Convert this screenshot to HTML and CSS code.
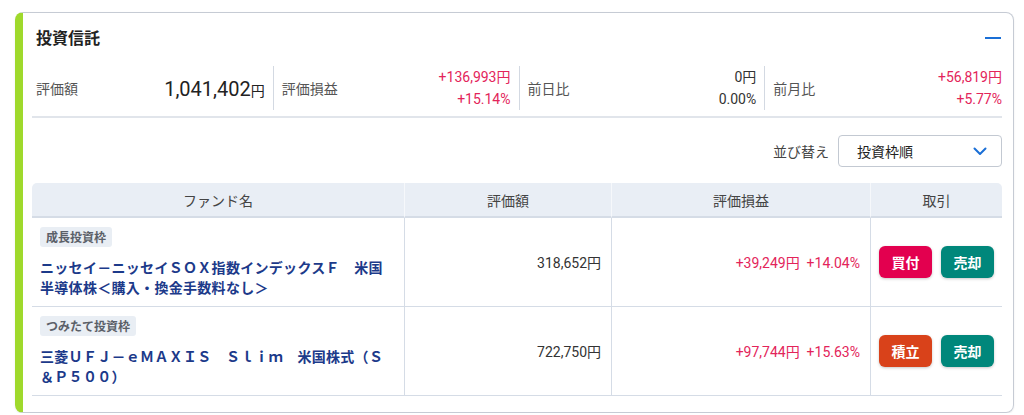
FILE: index.html
```html
<!DOCTYPE html>
<html lang="ja">
<head>
<meta charset="utf-8">
<link rel="stylesheet" href="styles.css">
</head>
<body>
<section class="card">
  <header class="card-head">
    <h2 class="title">投資信託</h2>
    <span class="collapse" aria-label="閉じる"></span>
  </header>

  <div class="summary">
    <div class="sum-cell">
      <span class="sum-label">評価額</span>
      <span class="sum-big">1,041,402<small>円</small></span>
    </div>
    <div class="sum-cell">
      <span class="sum-label">評価損益</span>
      <span class="sum-vals plus"><span>+136,993円</span><span>+15.14%</span></span>
    </div>
    <div class="sum-cell">
      <span class="sum-label">前日比</span>
      <span class="sum-vals"><span>0円</span><span>0.00%</span></span>
    </div>
    <div class="sum-cell">
      <span class="sum-label">前月比</span>
      <span class="sum-vals plus"><span>+56,819円</span><span>+5.77%</span></span>
    </div>
  </div>

  <hr class="sep">

  <div class="sort-row">
    <span class="sort-label">並び替え</span>
    <div class="select">
      <span>投資枠順</span>
      <svg class="chev" width="14" height="9" viewBox="0 0 14 9"><path d="M1.5 1.5 L7 7 L12.5 1.5" fill="none" stroke="#1a6fd6" stroke-width="2" stroke-linecap="round" stroke-linejoin="round"/></svg>
    </div>
  </div>

  <table class="funds">
    <colgroup>
      <col class="c-name"><col class="c-val"><col class="c-pl"><col class="c-act">
    </colgroup>
    <thead>
      <tr><th>ファンド名</th><th>評価額</th><th>評価損益</th><th>取引</th></tr>
    </thead>
    <tbody>
      <tr>
        <td class="name-cell">
          <span class="badge">成長投資枠</span>
          <div class="fund-name">ニッセイ－ニッセイＳＯＸ指数インデックスＦ　米国半導体株＜購入・換金手数料なし＞</div>
        </td>
        <td class="num">318,652円</td>
        <td class="num plus">+39,249円&nbsp;&nbsp;+14.04%</td>
        <td class="act">
          <div class="btns"><button class="btn buy">買付</button><button class="btn sell">売却</button></div>
        </td>
      </tr>
      <tr>
        <td class="name-cell">
          <span class="badge">つみたて投資枠</span>
          <div class="fund-name">三菱ＵＦＪ－ｅＭＡＸＩＳ　Ｓｌｉｍ　米国株式（Ｓ＆Ｐ５００）</div>
        </td>
        <td class="num">722,750円</td>
        <td class="num plus">+97,744円&nbsp;&nbsp;+15.63%</td>
        <td class="act">
          <div class="btns"><button class="btn tsumi">積立</button><button class="btn sell">売却</button></div>
        </td>
      </tr>
    </tbody>
  </table>
</section>
</body>
</html>
```

FILE: styles.css
```css
* { box-sizing: border-box; }
html, body { margin: 0; padding: 0; background: #ffffff; }
body {
  font-family: Roboto, "Noto Sans CJK JP", "Noto Sans", sans-serif;
  color: #222;
  font-size: 14px;
}
.card {
  margin: 12px 10px 0 15px;
  border: 1px solid #c6cbd4;
  border-left: 8px solid #9fd92c;
  border-radius: 8px;
  padding: 0 11px 16px 9px;
  box-shadow: 0 1px 2px rgba(0,0,0,0.08);
}
.card-head {
  height: 53px;
  display: flex;
  align-items: center;
  justify-content: space-between;
  padding-left: 4px;
  padding-bottom: 6px;
}
.title {
  margin: 0;
  font-size: 16px;
  font-weight: 700;
  color: #222;
  font-family: "Noto Sans CJK JP", sans-serif;
}
.collapse {
  display: block;
  width: 16px;
  height: 2px;
  background: #1a6fd6;
  margin-right: 1px;
  margin-top: 2px;
}
.summary {
  display: flex;
  height: 44px;
  margin: 0 -8px 0 -4px;
}
.sum-cell {
  flex: 1;
  display: flex;
  align-items: center;
  justify-content: space-between;
  padding: 0 8px;
  border-left: 1px solid #d3d9e2;
}
.sum-cell:first-child { border-left: none; }
.sum-label {
  font-family: "Noto Sans CJK JP", sans-serif;
  color: #555;
  font-size: 14px;
}
.sum-big {
  font-size: 20px;
  color: #222;
  margin-top: 2px;
}
.sum-big small { font-size: 14px; }
.sum-vals {
  display: flex;
  flex-direction: column;
  align-items: flex-end;
  line-height: 22px;
  color: #333;
}
.plus { color: #e3245a; }
.sep {
  margin: 6px 0 0;
  border: none;
  height: 2px;
  background: #e1e5eb;
}
.sort-row {
  margin-top: 17px;
  display: flex;
  justify-content: flex-end;
  align-items: center;
  gap: 9px;
}
.sort-label {
  color: #444;
  font-family: "Noto Sans CJK JP", sans-serif;
}
.select {
  width: 164px;
  height: 32px;
  border: 1px solid #c3c9d2;
  border-radius: 4px;
  display: flex;
  align-items: center;
  justify-content: space-between;
  padding: 0 14px 0 18px;
  font-family: "Noto Sans CJK JP", sans-serif;
  color: #222;
}
.funds {
  margin-top: 16px;
  width: 100%;
  border-collapse: separate;
  border-spacing: 0;
  table-layout: fixed;
}
.c-name { width: 372px; }
.c-val { width: 207px; }
.c-pl { width: 259px; }
.c-act { width: 132px; }
.funds th {
  background: #e9eef5;
  height: 35px;
  font-weight: 400;
  color: #444;
  font-family: "Noto Sans CJK JP", sans-serif;
  font-size: 14px;
  border-bottom: 2px solid #d5dce6;
  border-left: 1px solid #f6f8fb;
  padding: 0;
}
.funds th:first-child { border-left: none; border-top-left-radius: 5px; }
.funds th:last-child { border-top-right-radius: 5px; }
.funds td {
  border-bottom: 1px solid #d5dce6;
  border-left: 1px solid #d5dce6;
  height: 89px;
  vertical-align: middle;
}
.funds td:first-child { border-left: none; }
.name-cell {
  padding: 9px 8px 8px;
  vertical-align: top !important;
}
.badge {
  display: inline-block;
  height: 20px;
  line-height: 20px;
  padding: 0 6px;
  background: #e9eef4;
  border-radius: 3px;
  font-size: 12px;
  font-weight: 700;
  color: #5b6068;
  font-family: "Noto Sans CJK JP", sans-serif;
}
.fund-name {
  margin-top: 10px;
  max-width: 348px;
  font-family: "Noto Sans CJK JP", sans-serif;
  font-weight: 700;
  color: #1c3a8a;
  font-size: 14px;
  line-height: 20px;
  letter-spacing: 0.3px;
}
.num {
  text-align: right;
  padding: 0 10px;
  font-size: 14px;
  color: #333;
}
.num.plus { color: #e3245a; }
.act { padding: 0; }
.btns {
  display: flex;
  justify-content: center;
  gap: 9px;
}
.btn {
  width: 53px;
  height: 32px;
  border: none;
  border-radius: 6px;
  color: #fff;
  font-family: "Noto Sans CJK JP", sans-serif;
  font-weight: 700;
  font-size: 14px;
  padding: 0;
  box-shadow: 0 1px 3px rgba(0,0,0,0.22);
}
.buy { background: #e3004f; }
.sell { background: #00877b; }
.tsumi { background: #d9421a; }
```
